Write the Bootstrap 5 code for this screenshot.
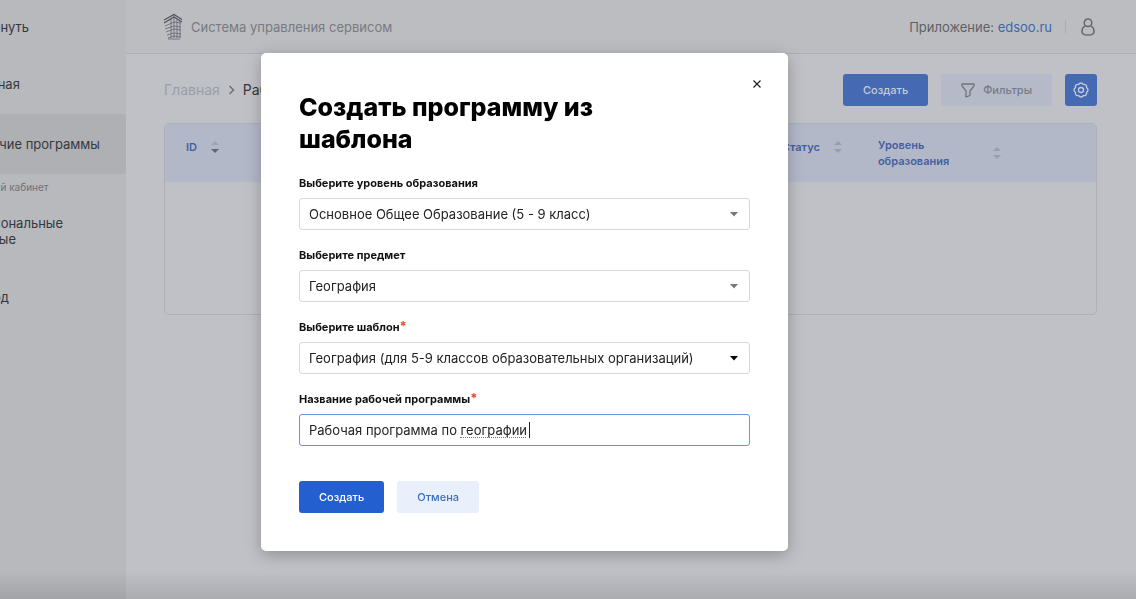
<!DOCTYPE html>
<html lang="ru">
<head>
<meta charset="utf-8">
<meta name="viewport" content="width=device-width, initial-scale=1">
<title>Система управления сервисом</title>
<link href="https://cdn.jsdelivr.net/npm/bootstrap@5.3.0/dist/css/bootstrap.min.css" rel="stylesheet">
<style>
  :root { --shift: 87px; --accent: #245fd0; }
  body { font-family: Inter, "Liberation Sans", sans-serif; font-size: 13px; line-height: 16px; color: #36383e; background: #c0c1c6; overflow: hidden; }
  /* the page is scrolled sideways, its left edge is out of view */
  .app-shell { margin-left: calc(-1 * var(--shift)); min-height: 100vh; }
  .side-menu { width: 213px; flex: none; background: #b7b9bd; }
  .side-menu a { display: flex; align-items: center; padding: 0 24px 0 55px; color: inherit; text-decoration: none; height: 60px; }
  .side-menu a.current { background: #aeb0b3; }
  .side-menu a.first-link { height: 54px; }
  .side-caption { font-size: 10px; padding: 5px 0 6px 55px; color: #707277; }
  .side-menu a.exit-link { margin-top: 6px; }
  .top-bar { height: 54px; background: #bcbdc1; border-bottom: 1px solid #adafb8; padding: 0 41px 0 37px; color: #787a80; }
  .top-bar a { color: #3d68a8; text-decoration: none; }
  .app-name { color: #5f6167; }
  .top-sep { width: 1px; height: 13px; background: #a9acb3; margin: 0 15px 0 13px; }
  .page-area { padding: 20px 39px 0 38px; }
  .crumbs { font-size: 14px; }
  .crumbs a { color: #9c9ea5; text-decoration: none; }
  .btn-row { gap: 13px; }
  .tool-btn { --bs-btn-font-size: 11px; --bs-btn-line-height: 16px; --bs-btn-border-radius: 3px; --bs-btn-padding-x: 20px; --bs-btn-padding-y: 8px; --bs-btn-font-weight: 500; height: 32px; }
  .dim-primary, .dim-primary:hover { background: #4569b2; color: #c5cbd8; }
  .dim-light, .dim-light:hover { background: #b5bac9; color: #777b86; }
  .dim-square { --bs-btn-padding-x: 8px; }
  .grid-frame { border: 1px solid #adb0ba; border-radius: 5px; min-height: 192px; margin-top: 17px; overflow: hidden; }
  .grid-frame table { table-layout: fixed; width: 100%; font-size: 11px; }
  .grid-frame thead { background: #b3b8c9; color: #4560a0; }
  .grid-frame th { height: 58px; padding: 13px 0 0 21px; font-weight: 600; vertical-align: top; }
  .head-cell { gap: 14px; padding-top: 2px; }
  .head-cell.two-lines { gap: 44px; padding-top: 0; }
  .sorter { width: 8px; height: 12px; flex: none; }
  .bottom-shade { height: 28px; background: linear-gradient(transparent, #0000001c); pointer-events: none; }
  .modal { left: calc(-1 * var(--shift)); width: calc(100% + var(--shift)); color: #111; }
  .modal-dialog { --bs-modal-width: 527px; margin-top: 53px; }
  .modal-content { border: 0; border-radius: 5px; padding: 38px; box-shadow: 0 4px 16px #00000040; }
  .modal h1 { font-size: 25px; line-height: 32px; font-weight: 800; margin: 0 64px 20px 0; color: #000; }
  .close-x { top: 24px; right: 24px; width: 14px; height: 14px; }
  .field { margin-bottom: 17px; }
  .field label { display: block; font-size: 11px; line-height: 16px; font-weight: 700; margin-bottom: 7px; }
  .req { color: #e5492d; font-size: 13px; line-height: 1; }
  .field .form-select, .field .form-control { height: 32px; font-size: 13px; line-height: 16px; padding: 7px 32px 7px 9px; border: 1px solid #d7d9dc; border-radius: 3px; color: #222; background-color: #fff; }
  .field .form-select { background-image: url("data:image/svg+xml,%3Csvg xmlns='http://www.w3.org/2000/svg' viewBox='0 0 8 5'%3E%3Cpath fill='%23777' d='M0 0h8L4 4.5z'/%3E%3C/svg%3E"); background-size: 8px 5px; background-position: right 11px center; }
  .field .form-select.dark-arrow { background-image: url("data:image/svg+xml,%3Csvg xmlns='http://www.w3.org/2000/svg' viewBox='0 0 8 5'%3E%3Cpath d='M0 0h8L4 4.5z'/%3E%3C/svg%3E"); }
  .field .form-control { border-color: #6c93df; }
  .spell-line { left: 161px; top: 23px; width: 66px; border-top: 1px dotted #5d6fd8; }
  .caret { left: 230px; top: 8px; width: 1px; height: 16px; background: #222; }
  .form-actions { padding-top: 18px; }
  .go, .go:hover { background: var(--accent); color: #fff; }
  .back, .back:hover { background: #e9f0fc; color: #3b6dc0; }
</style>
</head>
<body>
<div class="app-shell d-flex">
  <nav class="side-menu">
    <a class="first-link" href="#">Свернуть</a>
    <a href="#">Главная</a>
    <a class="current" href="#">Рабочие программы</a>
    <div class="side-caption">Личный кабинет</div>
    <a href="#">Персональные<br>данные</a>
    <a class="exit-link" href="#">Выход</a>
  </nav>
  <div class="flex-grow-1">
    <header class="top-bar d-flex align-items-center">
      <svg class="me-2" width="20" height="28" viewBox="0 0 20 28" fill="none" stroke="#63656e" stroke-width="1">
        <path d="m1 7 10-5.500 8 5M1 10l10-6 8 5" stroke="#50525c" stroke-width="1.200"/>
        <path d="M11 2v23M8 5v20M14 6v19M17 8v17" stroke-width=".8"/>
        <path d="m2 13 9-4 7 1M2 16l9-3 7 1M3 19l8-3 7 1M4 22l7-2 7 1M5 25l6-2 7 1M5 26h12" stroke-width=".8"/>
      </svg>
      <span>Система управления сервисом</span>
      <span class="ms-auto app-name">Приложение: <a href="#">edsoo.ru</a></span>
      <span class="top-sep"></span>
      <svg width="14" height="18" viewBox="0 0 14 18" fill="none" stroke="#66686e" stroke-width="1.500"><circle cx="7" cy="4.800" r="3.800"/><path d="M4.200 7.800C2 9 1 11 1 13.400c0 2.600 2 3.600 6 3.600s6-1 6-3.600c0-2.400-1-4.400-3.200-5.600"/></svg>
    </header>
    <main class="page-area">
      <div class="btn-row d-flex align-items-center">
        <div class="crumbs d-flex align-items-center gap-2 me-auto">
          <a href="#">Главная</a>
          <svg width="7" height="10" viewBox="0 0 7 10" fill="none" stroke="#6d6f75" stroke-width="1.500"><path d="m1.500 1 4 4-4 4"/></svg>
          <span>Рабочие</span>
        </div>
        <button type="button" class="btn tool-btn dim-primary border-0">Создать</button>
        <button type="button" class="btn tool-btn dim-light border-0 d-flex align-items-center gap-2">
          <svg width="14" height="15" viewBox="0 0 14 15" fill="none" stroke="#70737b" stroke-width="1.300" stroke-linejoin="round"><path d="M1 1h12v1.800L9 8v4.500L5 14V8L1 2.800z"/></svg>
          Фильтры
        </button>
        <button type="button" class="btn tool-btn dim-primary dim-square border-0 d-flex" aria-label="Настройки">
          <svg width="16" height="16" viewBox="0 0 16 16" fill="none" stroke="currentColor" stroke-width="1.300" stroke-linejoin="round"><path d="M5.700 2.500a2.500 2.500 0 0 1 4.600 0 2.500 2.500 0 0 1 3.200 3.200 2.500 2.500 0 0 1 0 4.600 2.500 2.500 0 0 1-3.200 3.200 2.500 2.500 0 0 1-4.600 0 2.500 2.500 0 0 1-3.200-3.200 2.500 2.500 0 0 1 0-4.600 2.500 2.500 0 0 1 3.200-3.200z"/><circle cx="8" cy="8" r="2.500"/></svg>
        </button>
      </div>
      <div class="grid-frame">
        <table>
          <colgroup><col style="width:10%"><col style="width:54%"><col style="width:10%"><col></colgroup>
          <thead>
            <tr>
              <th scope="col"><div class="head-cell d-flex align-items-center">ID
                <svg class="sorter" viewBox="0 0 8 12"><path fill="#9fa3af" d="M0 4h8L4 0z"/><path fill="#62656f" d="M0 8h8l-4 4z"/></svg></div></th>
              <td></td>
              <th scope="col"><div class="head-cell d-flex align-items-center">Статус
                <svg class="sorter" viewBox="0 0 8 12" fill="#9a9da8"><path d="M0 4h8L4 0zM0 8h8l-4 4z"/></svg></div></th>
              <th class="ps-4" scope="col"><div class="head-cell two-lines d-flex align-items-center"><span>Уровень<br>образования</span>
                <svg class="sorter" viewBox="0 0 8 12" fill="#9a9da8"><path d="M0 4h8L4 0zM0 8h8l-4 4z"/></svg></div></th>
            </tr>
          </thead>
        </table>
      </div>
    </main>
  </div>
</div>
<div class="bottom-shade fixed-bottom"></div>

<div class="modal d-block" role="dialog" aria-modal="true" aria-labelledby="dlg-title">
  <div class="modal-dialog">
    <form class="modal-content">
      <button type="button" class="close-x btn p-0 border-0 position-absolute d-flex align-items-center justify-content-center" aria-label="Закрыть">
        <svg width="8" height="8" viewBox="0 0 8 8" stroke="#222" stroke-width="1.200"><path d="m.5.5 7 7m0-7-7 7"/></svg>
      </button>
      <h1 id="dlg-title">Создать программу из шаблона</h1>
      <div class="field">
        <label for="level">Выберите уровень образования</label>
        <select id="level" class="form-select"><option>Основное Общее Образование (5 - 9 класс)</option></select>
      </div>
      <div class="field">
        <label for="subject">Выберите предмет</label>
        <select id="subject" class="form-select"><option>География</option></select>
      </div>
      <div class="field">
        <label for="tpl">Выберите шаблон<span class="req">*</span></label>
        <select id="tpl" class="form-select dark-arrow"><option>География (для 5-9 классов образовательных организаций)</option></select>
      </div>
      <div class="field">
        <label for="prog">Название рабочей программы<span class="req">*</span></label>
        <div class="position-relative">
          <input id="prog" class="form-control" type="text" value="Рабочая программа по географии ">
          <span class="spell-line position-absolute"></span><span class="caret position-absolute"></span>
        </div>
      </div>
      <div class="form-actions btn-row d-flex">
        <button type="submit" class="btn tool-btn go border-0">Создать</button>
        <button type="button" class="btn tool-btn back border-0">Отмена</button>
      </div>
    </form>
  </div>
</div>
<script src="https://cdn.jsdelivr.net/npm/bootstrap@5.3.0/dist/js/bootstrap.bundle.min.js"></script>
</body>
</html>
